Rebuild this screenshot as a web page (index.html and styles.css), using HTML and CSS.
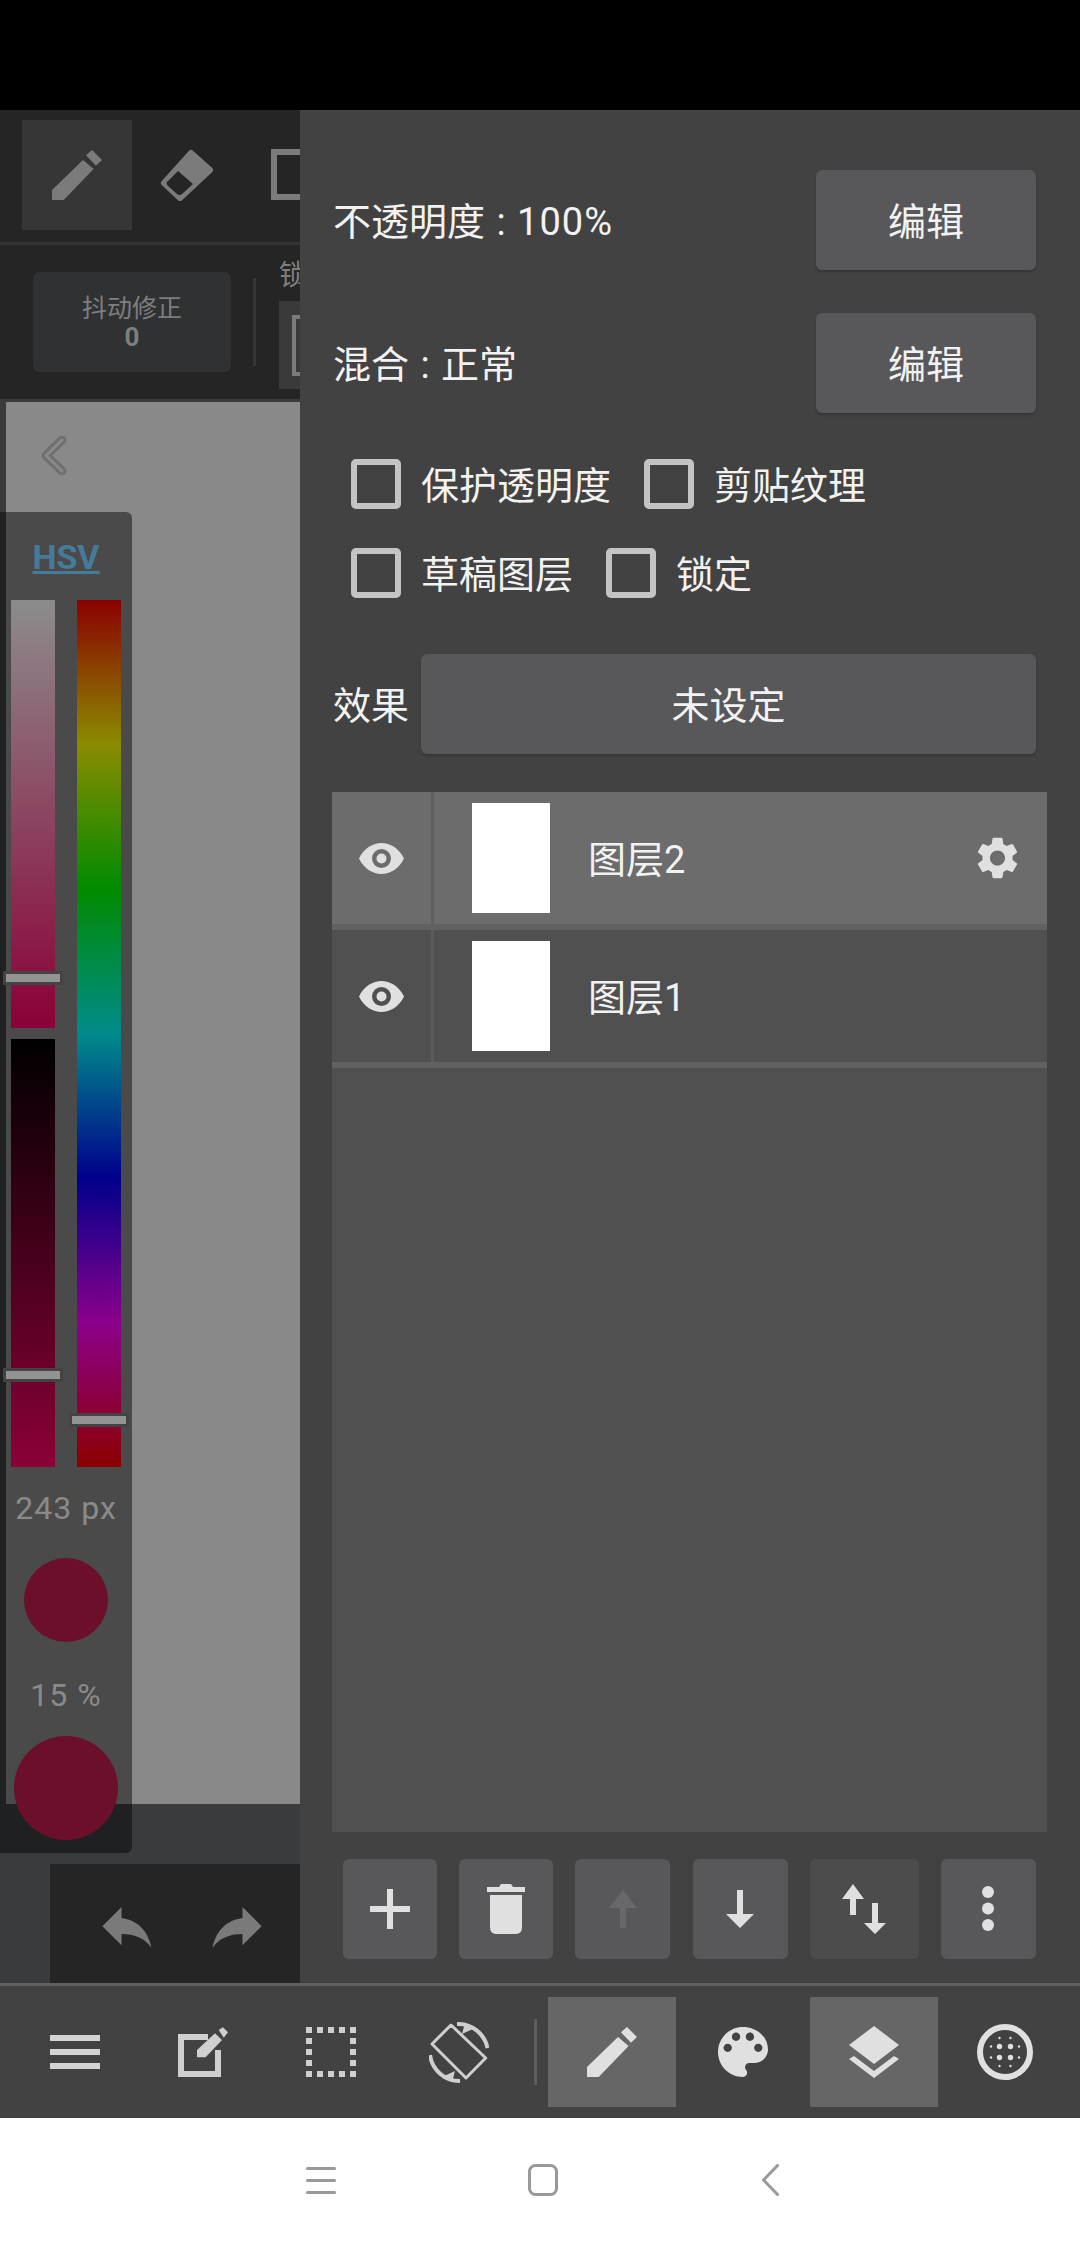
FILE: index.html
```html
<!DOCTYPE html>
<html lang="zh-CN">
<head>
    <meta charset="UTF-8">
    <title>图层</title>
    <link rel="stylesheet" href="styles.css">
</head>
<body>
<div id="status"></div>
<div id="main">
    <div id="left">
        <div class="tools">
            <div class="tool-btn">
                <svg class="ico-pen" viewBox="0 0 50 50"><path d="M0 50V40L31 10 41.600 19 11.700 50ZM34 5.300 40 0 50 10 44 15.700Z"/></svg>
            </div>
            <svg class="ico-eraser" viewBox="0 0 54 52">
                <path class="eraser-body" d="M31 4 50 21 20 49 4 34Z"/>
                <path class="eraser-hole" d="M18 22 33 35 22 45Q20 47 17 45L8 37Q5 34 8 32Z"/>
            </svg>
            <div class="tool-rect"></div>
        </div>
        <div class="options">
            <div class="jitter">抖动修正<b>0</b></div>
            <div class="opt-sep"></div>
            <div class="lock">
                <span class="lock-text">锁定</span>
                <div class="lock-box"><i></i></div>
            </div>
        </div>
        <div id="canvas">
            <svg class="back" viewBox="0 0 26 39">
                <path class="back-o" d="M21 4 5 19.500 21 35"/>
                <path class="back-i" d="M21 4 5 19.500 21 35"/>
            </svg>
        </div>
        <div class="history">
            <div class="history-bar">
                <svg class="ico-undo" viewBox="3 5 18 15"><path d="M10 9V5l-7 7 7 7v-4.100c5 0 8.500 1.600 11 5.100-1-5-4-10-11-11z"/></svg>
                <svg class="ico-undo redo" viewBox="3 5 18 15"><path d="M14 9V5l7 7-7 7v-4.100c-5 0-8.500 1.600-11 5.100 1-5 4-10 11-11z"/></svg>
            </div>
        </div>
        <div id="color">
            <div class="hsv">HSV</div>
            <div class="sliders">
                <div class="col-sv">
                    <div class="bar bar-s"></div>
                    <div class="bar bar-v"></div>
                </div>
                <div class="bar bar-h"></div>
                <div class="thumb th-s"></div>
                <div class="thumb th-v"></div>
                <div class="thumb th-h"></div>
            </div>
            <div class="size-label">243 px</div>
            <div class="dot dot-small"></div>
            <div class="size-label pct">15 %</div>
            <div class="dot dot-big"></div>
        </div>
    </div>
    <div id="panel">
        <div class="row">
            <span>不透明度 : <em>100%</em></span>
            <div class="btn btn-edit">编辑</div>
        </div>
        <div class="row row2">
            <span>混合 : 正常</span>
            <div class="btn btn-edit">编辑</div>
        </div>
        <div class="checks">
            <i class="box"></i><span>保护透明度</span>
            <i class="box"></i><span>剪贴纹理</span>
        </div>
        <div class="checks checks2">
            <i class="box"></i><span>草稿图层</span>
            <i class="box"></i><span>锁定</span>
        </div>
        <div class="row effect">
            <span>效果</span>
            <div class="btn btn-effect">未设定</div>
        </div>
        <ul id="layers">
            <li class="selected">
                <div class="eye">
                    <svg class="ico-eye" viewBox="0 0 45 31"><path fill-rule="evenodd" d="M0 15.500C5 5 14 0 22.500 0S40 5 45 15.500C40 26 31 31 22.500 31S5 26 0 15.500ZM22.500 6A9.500 9.500 0 1 0 22.500 25 9.500 9.500 0 1 0 22.500 6ZM22.500 10.500A5 5 0 1 1 22.500 20.500 5 5 0 1 1 22.500 10.500Z"/></svg>
                </div>
                <div class="thumbnail"></div>
                <span class="name">图层2</span>
                <svg class="ico-gear" viewBox="2.500 2 19 20"><path d="M19.140 12.940c.04-.3.06-.61.06-.94 0-.32-.02-.64-.07-.94l2.030-1.580c.18-.14.23-.41.12-.61l-1.920-3.320c-.12-.22-.37-.29-.59-.22l-2.390.96c-.5-.38-1.030-.7-1.620-.94l-.36-2.540c-.04-.24-.24-.41-.48-.41h-3.840c-.24 0-.43.17-.47.41l-.36 2.540c-.59.24-1.130.57-1.620.94l-2.390-.96c-.22-.08-.47 0-.59.22L2.740 8.870c-.12.21-.08.47.12.61l2.030 1.580c-.05.3-.09.63-.09.94s.02.64.07.94l-2.030 1.580c-.18.14-.23.41-.12.61l1.920 3.320c.12.22.37.29.59.22l2.390-.96c.5.38 1.030.7 1.620.94l.36 2.540c.05.24.24.41.48.41h3.840c.24 0 .44-.17.47-.41l.36-2.540c.59-.24 1.130-.56 1.620-.94l2.390.96c.22.08.47 0 .59-.22l1.920-3.320c.12-.22.07-.47-.12-.61l-2.010-1.580zM12 15.600c-1.980 0-3.600-1.620-3.600-3.600s1.620-3.600 3.600-3.600 3.600 1.620 3.600 3.600-1.620 3.600-3.600 3.600z"/></svg>
            </li>
            <li>
                <div class="eye">
                    <svg class="ico-eye" viewBox="0 0 45 31"><path fill-rule="evenodd" d="M0 15.500C5 5 14 0 22.500 0S40 5 45 15.500C40 26 31 31 22.500 31S5 26 0 15.500ZM22.500 6A9.500 9.500 0 1 0 22.500 25 9.500 9.500 0 1 0 22.500 6ZM22.500 10.500A5 5 0 1 1 22.500 20.500 5 5 0 1 1 22.500 10.500Z"/></svg>
                </div>
                <div class="thumbnail"></div>
                <span class="name">图层1</span>
            </li>
        </ul>
        <div class="actions">
            <div class="act">
                <svg class="ico-act" viewBox="0 0 60 60"><path d="M27 10h6v17h17v6H33v17h-6V33H10v-6h17z"/></svg>
            </div>
            <div class="act">
                <svg class="ico-act" viewBox="0 0 60 60"><path d="M25 5h10l2 3h12v5H11V8h12zM14 16h32v32q0 7-6 7H20q-6 0-6-7z"/></svg>
            </div>
            <div class="act act-w">
                <svg class="ico-act off" viewBox="0 0 60 60"><path d="M30 11 44 29H33V49H27V29H16z"/></svg>
            </div>
            <div class="act act-w">
                <svg class="ico-act" viewBox="0 0 60 60"><path d="M27 11h6V35H44L30 49 16 35H27z"/></svg>
            </div>
            <div class="act act-swap">
                <svg class="ico-act" viewBox="0 0 60 60"><path d="M19 5 30 20H22V36H16V20H8zM38 24H44V44H52L41 55 30 44H38z"/></svg>
            </div>
            <div class="act act-w">
                <svg class="ico-act" viewBox="0 0 60 60"><ellipse cx="30" cy="13" rx="6" ry="6"/><ellipse cx="30" cy="29.500" rx="6" ry="6"/><ellipse cx="30" cy="46" rx="6" ry="6"/></svg>
            </div>
        </div>
    </div>
</div>
<div id="bottom">
    <div class="cell">
        <svg class="ico-menu" viewBox="0 0 50 34"><path d="M0 0h50v6H0zM0 14h50v6H0zM0 28h50v6H0z"/></svg>
    </div>
    <div class="cell">
        <svg class="ico-50 dim" viewBox="0 0 50 50">
            <path class="ln" d="M30 10H3V47H40V23"/>
            <path d="M19 30.300V23L37 6.300 44 13 27.600 30.300ZM40.700 3 44.800.3 50 5.300 45.800 10.700Z"/>
        </svg>
    </div>
    <div class="cell">
        <svg class="ico-50 dim" viewBox="0 0 50 50"><path d="M0 0h6v6H0zM11 0h6v6h-6zM22 0h6v6h-6zM33 0h6v6h-6zM44 0h6v6h-6zM0 11h6v6H0zM44 11h6v6h-6zM0 22h6v6H0zM44 22h6v6h-6zM0 33h6v6H0zM44 33h6v6h-6zM0 44h6v6H0zM11 44h6v6h-6zM22 44h6v6h-6zM33 44h6v6h-6zM44 44h6v6h-6z"/></svg>
    </div>
    <div class="cell">
        <svg class="ico-rotate" viewBox="0 0 60 61">
            <path class="ln" d="M22 3 56.700 36 37 56 3 22Z"/>
            <path class="ln arc" d="M28 2A30 30 0 0 1 58.500 26"/>
            <path class="ln arc" d="M1 33A30 30 0 0 0 31 59"/>
            <path d="M33 12 36 1 46 6ZM26 49 23 60 13 55Z"/>
        </svg>
    </div>
    <div class="bar-sep"></div>
    <div class="cell active">
        <svg class="ico-50" viewBox="0 0 50 50"><path d="M0 50V40L31 10 41.600 19 11.700 50ZM34 5.300 40 0 50 10 44 15.700Z"/></svg>
    </div>
    <div class="cell wide">
        <svg class="ico-50" viewBox="3 3 18 18"><path d="M12 3c-4.970 0-9 4.030-9 9s4.030 9 9 9c.83 0 1.500-.67 1.500-1.500 0-.39-.15-.74-.39-1.010-.23-.26-.38-.61-.38-.99 0-.83.67-1.500 1.500-1.500H16c2.760 0 5-2.240 5-5 0-4.420-4.030-8-9-8zm-5.500 9c-.83 0-1.500-.67-1.500-1.500S5.670 9 6.500 9 8 9.670 8 10.500 7.330 12 6.500 12zm3-4C8.670 8 8 7.330 8 6.500S8.670 5 9.500 5s1.500.67 1.500 1.500S10.330 8 9.500 8zm5 0c-.83 0-1.500-.67-1.500-1.500S13.670 5 14.500 5s1.500.67 1.500 1.500S15.330 8 14.500 8zm3 4c-.83 0-1.500-.67-1.500-1.500S16.670 9 17.500 9s1.500.67 1.500 1.500-.67 1.500-1.500 1.500z"/></svg>
    </div>
    <div class="cell active">
        <svg class="ico-layers" viewBox="0 0 50 52"><path d="M25 0 50 19 25 38 0 19ZM0 33 5 30 25 45 45 30 50 33 25 52Z"/></svg>
    </div>
    <div class="cell wide">
        <svg class="ico-dots" viewBox="-28 -28 56 56">
            <circle class="ring" r="25"/>
            <circle cx="-5.500" cy="-5.500" r="2.700"/><circle cx="5.500" cy="-5.500" r="2.700"/>
            <circle cx="-5.500" cy="5.500" r="2.700"/><circle cx="5.500" cy="5.500" r="2.700"/>
            <circle cx="-5.500" cy="-14" r="1.200"/><circle cx="5.500" cy="-14" r="1.200"/>
            <circle cx="-5.500" cy="14" r="1.200"/><circle cx="5.500" cy="14" r="1.200"/>
            <circle cx="-14" cy="-5.500" r="1.200"/><circle cx="-14" cy="5.500" r="1.200"/>
            <circle cx="14" cy="-5.500" r="1.200"/><circle cx="14" cy="5.500" r="1.200"/>
        </svg>
    </div>
</div>
<div id="nav">
    <svg class="nav-menu" viewBox="0 0 30 27"><path d="M1.500 1.500h27M1.500 13.500h27M1.500 25.500h27"/></svg>
    <svg class="nav-home" viewBox="0 0 30 32"><rect x="1.500" y="1.500" width="27" height="29" rx="6"/></svg>
    <svg class="nav-back" viewBox="0 0 17 32"><path d="M15.500 1.500 1.500 16 15.500 30.500"/></svg>
</div>
</body>
</html>
```

FILE: styles.css
```css
*{
    margin: 0;
    padding: 0;
    box-sizing: border-box;
}
li{
    list-style: none;
}
i{
    display: block;
}
em{
    font-style: normal;
    letter-spacing: 1px;
}
svg{
    display: block;
    flex: none;
}
body{
    width: 1080px;
    height: 2248px;
    overflow: hidden;
    display: flex;
    flex-direction: column;
    background: #fff;
    font-family: Roboto, "Noto Sans CJK SC", sans-serif;
}
#status{
    height: 110px;
    background: #000;
}
#main{
    height: 1873px;
    display: flex;
}

/* dimmed drawing side */
#left{
    width: 300px;
    position: relative;
    overflow: hidden;
    display: flex;
    flex-direction: column;
    background: #3a3b3d;
}
.tools{
    height: 135px;
    flex: none;
    display: flex;
    align-items: center;
    padding: 0 0 3px 22px;
    background: #252525;
    border-bottom: 3px solid #333;
}
.tool-btn{
    width: 110px;
    height: 110px;
    flex: none;
    display: flex;
    align-items: center;
    justify-content: center;
    background: #363636;
}
.ico-pen{
    width: 50px;
    height: 50px;
    fill: #7b7b7b;
}
.ico-eraser{
    width: 54px;
    height: 52px;
    margin-left: 28px;
}
.eraser-body{
    fill: #7b7b7b;
    stroke: #7b7b7b;
    stroke-width: 6px;
    stroke-linejoin: round;
}
.eraser-hole{
    fill: #252525;
}
.tool-rect{
    width: 60px;
    height: 51px;
    flex: none;
    margin-left: 57px;
    border: 6px solid #7b7b7b;
}
.options{
    height: 157px;
    flex: none;
    display: flex;
    align-items: center;
    padding-left: 33px;
    background: #252525;
    border-bottom: 3px solid #3a3b3d;
}
.jitter{
    width: 198px;
    height: 100px;
    flex: none;
    display: flex;
    flex-direction: column;
    align-items: center;
    justify-content: center;
    padding-top: 2px;
    background: #303133;
    border-radius: 6px;
    color: #7e7e7e;
    font-size: 25px;
    line-height: 29px;
}
.jitter b{
    font-size: 26px;
    font-weight: 700;
}
.opt-sep{
    width: 3px;
    height: 88px;
    flex: none;
    margin-left: 22px;
    background: #363636;
}
.lock{
    width: 60px;
    flex: none;
    align-self: flex-end;
    margin: 0 0 10px 23px;
    color: #7e7e7e;
    font-size: 28px;
    line-height: 34px;
    white-space: nowrap;
}
.lock-box{
    width: 60px;
    height: 88px;
    margin-top: 8px;
    padding: 14px 0 13px 13px;
    background: #3a3a3a;
}
.lock-box i{
    width: 40px;
    height: 61px;
    border: 4px solid #7b7b7b;
}
#canvas{
    height: 1402px;
    flex: none;
    margin-left: 6px;
    padding: 34px 0 0 35px;
    background: #898989;
}
.back{
    width: 26px;
    height: 39px;
    fill: none;
    stroke-linejoin: round;
    stroke-linecap: round;
}
.back-o{
    stroke: #707070;
    stroke-width: 9px;
}
.back-i{
    stroke: #898989;
    stroke-width: 3px;
}
.history{
    flex: 1;
    display: flex;
    align-items: flex-end;
    padding-left: 50px;
}
.history-bar{
    width: 100%;
    height: 119px;
    display: flex;
    align-items: center;
    padding: 7px 0 0 52px;
    background: #252525;
}
.ico-undo{
    width: 50px;
    height: 41px;
    fill: #7a7a7a;
}
.redo{
    margin-left: 60px;
}

/* colour sliders, floats over the canvas */
#color{
    position: absolute;
    left: 0;
    top: 402px;
    width: 132px;
    height: 1341px;
    display: flex;
    flex-direction: column;
    align-items: center;
    background: rgba(0, 0, 0, .46);
    border-radius: 0 6px 6px 0;
}
.hsv{
    height: 88px;
    padding-top: 26px;
    color: #457b99;
    font-size: 34px;
    font-weight: 700;
    line-height: 38px;
    text-decoration: underline;
}
.sliders{
    width: 132px;
    height: 867px;
    flex: none;
    position: relative;
    display: flex;
    gap: 22px;
    padding-left: 11px;
}
.col-sv{
    width: 44px;
    display: flex;
    flex-direction: column;
    gap: 11px;
}
.bar{
    width: 44px;
    flex: 1;
}
.bar-s{
    background: linear-gradient(#8c8c8c, #8b0038);
}
.bar-v{
    background: linear-gradient(#000, #8b0038);
}
.bar-h{
    flex: none;
    height: 867px;
    background: linear-gradient(#8b0000, #8b8b00 16.67%, #008b00 33.33%, #008b8b 50%, #00008b 66.67%, #8b008b 83.33%, #8b0000);
}
.thumb{
    position: absolute;
    width: 60px;
    height: 14px;
    background: #939393;
    border: 3px solid #434343;
}
.th-s{
    left: 3px;
    top: 371px;
}
.th-v{
    left: 3px;
    top: 768px;
}
.th-h{
    left: 69px;
    top: 813px;
}
.size-label{
    height: 82px;
    color: #8a8a8a;
    font-size: 32px;
    line-height: 82px;
    letter-spacing: 1px;
}
.pct{
    height: 94px;
    padding-top: 12px;
}
.dot{
    flex: none;
    margin-top: 9px;
    border-radius: 50%;
    background: #6b0f2b;
}
.dot-small{
    width: 84px;
    height: 84px;
}
.dot-big{
    width: 104px;
    height: 104px;
    margin-top: 0;
}

/* layer panel */
#panel{
    flex: 1;
    display: flex;
    flex-direction: column;
    padding: 60px 33px 24px 32px;
    background: #424242;
    color: #f2f2f2;
    font-size: 38px;
    line-height: 50px;
    word-spacing: 2px;
}
#panel span,
.btn{
    padding-top: 3px;
}
.row{
    display: flex;
    align-items: center;
    justify-content: space-between;
    padding: 0 11px 0 1px;
}
.row2{
    margin-top: 43px;
}
.btn{
    height: 100px;
    display: flex;
    align-items: center;
    justify-content: center;
    background: #58585a;
    border-radius: 6px;
    box-shadow: 0 2px 3px rgba(0, 0, 0, .2);
}
.btn-edit{
    width: 220px;
}
.btn-effect{
    width: 615px;
}
.checks{
    height: 50px;
    display: flex;
    align-items: center;
    margin-top: 46px;
    padding-left: 19px;
}
.checks2{
    margin-top: 39px;
}
.box{
    width: 50px;
    height: 50px;
    flex: none;
    border: 6px solid #c4c4c4;
    border-radius: 5px;
    margin-right: 20px;
}
.checks span{
    margin-right: 33px;
}
.effect{
    margin-top: 56px;
}
#layers{
    flex: 1;
    margin-top: 38px;
    background: #505050;
}
#layers li{
    height: 138px;
    display: flex;
    align-items: center;
    border-bottom: 6px solid #616161;
}
#layers .selected{
    background: #6c6c6c;
}
.eye{
    width: 102px;
    height: 132px;
    flex: none;
    display: flex;
    align-items: center;
    padding-left: 27px;
    border-right: 3px solid #5c5c5c;
}
.selected .eye{
    border-right-color: #5f5f5f;
}
.ico-eye{
    width: 45px;
    height: 31px;
    fill: #e0e0e0;
}
.thumbnail{
    width: 78px;
    height: 110px;
    flex: none;
    margin-left: 38px;
    background: #fff;
}
.name{
    margin-left: 38px;
}
.ico-gear{
    width: 41px;
    height: 42px;
    margin-left: auto;
    margin-right: 29px;
    fill: #e0e0e0;
}
.actions{
    display: flex;
    justify-content: space-between;
    margin-top: 27px;
    padding: 0 11px;
}
.act{
    width: 94px;
    height: 100px;
    display: flex;
    align-items: center;
    justify-content: center;
    background: #58585a;
    border-radius: 6px;
}
.act-w{
    width: 95px;
}
.act-swap{
    width: 109px;
    background: #4c4c4c;
}
.ico-act{
    width: 60px;
    height: 60px;
    fill: #e0e0e0;
}
.off{
    fill: #686868;
}

/* bottom bars */
#bottom{
    height: 135px;
    display: flex;
    align-items: center;
    padding-left: 11px;
    background: #424242;
    border-top: 3px solid #5f5f5f;
}
.cell{
    width: 128px;
    height: 110px;
    flex: none;
    display: flex;
    align-items: center;
    justify-content: center;
}
.active{
    background: #666;
}
.wide{
    width: 134px;
}
.bar-sep{
    width: 3px;
    height: 66px;
    flex: none;
    margin: 0 11px;
    background: #5e5e5e;
}
.ico-menu{
    width: 50px;
    height: 34px;
    fill: #d4d4d4;
}
.ico-50{
    width: 50px;
    height: 50px;
    fill: #e0e0e0;
}
.dim{
    fill: #cfcfcf;
}
.ln{
    fill: none;
    stroke: #cfcfcf;
    stroke-width: 6px;
}
.ico-rotate{
    width: 60px;
    height: 61px;
    fill: #cfcfcf;
}
.ico-rotate .ln{
    stroke-width: 3px;
    stroke-linejoin: round;
}
.ico-rotate .arc{
    stroke-width: 4px;
}
.ico-layers{
    width: 50px;
    height: 52px;
    fill: #e0e0e0;
}
.ico-dots{
    width: 56px;
    height: 56px;
    fill: #e0e0e0;
}
.ring{
    fill: none;
    stroke: #e0e0e0;
    stroke-width: 6px;
}
#nav{
    flex: 1;
    display: flex;
    align-items: center;
    padding: 0 0 6px 306px;
    background: #fff;
    fill: none;
    stroke: #999;
    stroke-width: 3px;
    stroke-linecap: round;
    stroke-linejoin: round;
}
.nav-menu{
    width: 30px;
    height: 27px;
}
.nav-home{
    width: 30px;
    height: 32px;
    margin-left: 192px;
}
.nav-back{
    width: 17px;
    height: 32px;
    margin-left: 204px;
}
```
